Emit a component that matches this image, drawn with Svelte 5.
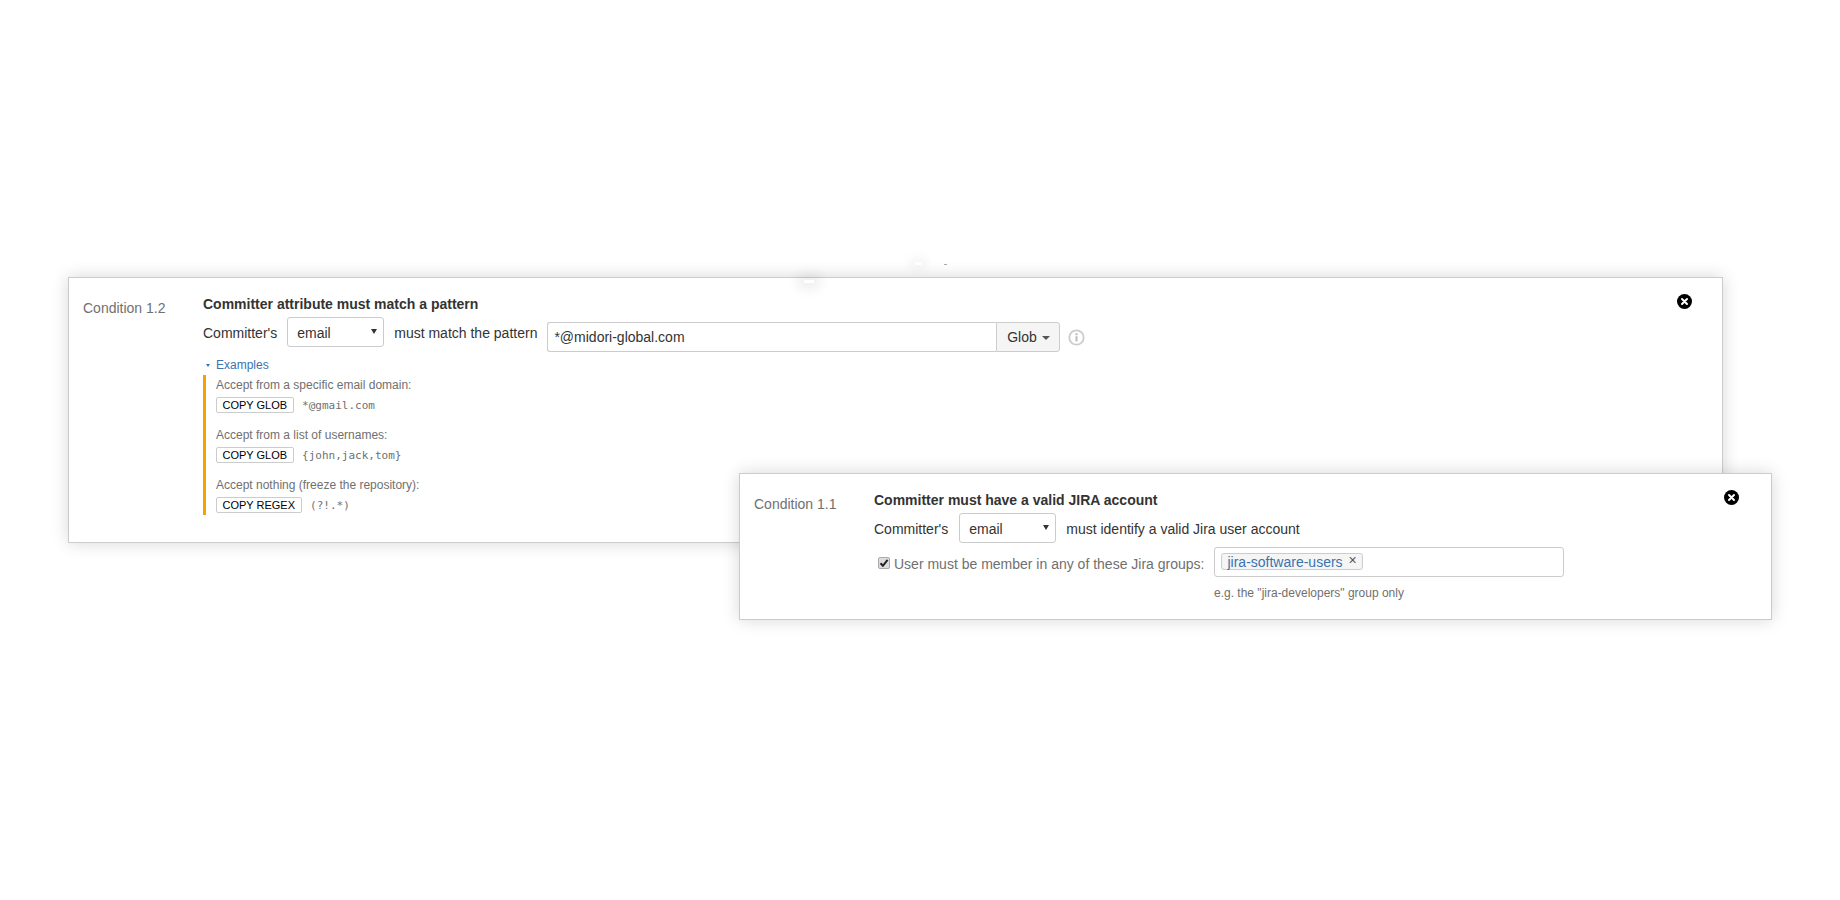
<script>
  const examples = [
    { title: "Accept from a specific email domain:", button: "COPY GLOB", code: "*@gmail.com" },
    { title: "Accept from a list of usernames:", button: "COPY GLOB", code: "{john,jack,tom}" },
    { title: "Accept nothing (freeze the repository):", button: "COPY REGEX", code: "(?!.*)" },
  ];
</script>

{#snippet closeIcon()}
  <svg class="close" width="15" height="15" viewBox="0 0 15 15" aria-hidden="true">
    <circle cx="7.5" cy="7.5" r="7.5" fill="#000" />
    <path d="M5 5l5 5M10 5l-5 5" stroke="#fff" stroke-width="2" stroke-linecap="round" />
  </svg>
{/snippet}

{#snippet attributeSelect()}
  <span class="select-wrap">
    <select>
      <option>email</option>
      <option>username</option>
    </select>
  </span>
{/snippet}

<main class="canvas">
  <section class="card card-pattern">
    <div class="condition">Condition 1.2</div>
    <div class="body">
      <h3>Committer attribute must match a pattern</h3>
      <div class="row">
        <span class="text">Committer's</span>
        {@render attributeSelect()}
        <span class="text">must match the pattern</span>
        <div class="pattern-group">
          <input class="pattern" type="text" value="*@midori-global.com" />
          <button class="glob">Glob <i class="caret"></i></button>
        </div>
        <svg class="info" width="17" height="17" viewBox="0 0 17 17" aria-hidden="true">
          <circle cx="8.5" cy="8.5" r="7.2" fill="none" stroke="#ccc" stroke-width="1.8" />
          <rect x="7.5" y="7.2" width="2" height="5.2" fill="#bbb" />
          <rect x="7.5" y="4.2" width="2" height="2" fill="#bbb" />
        </svg>
      </div>

      <div class="examples-toggle"><i class="tri"></i>Examples</div>
      <div class="examples">
        {#each examples as ex}
          <div class="example">
            <div class="example-title">{ex.title}</div>
            <div class="example-line">
              <button class="copy">{ex.button}</button>
              <code>{ex.code}</code>
            </div>
          </div>
        {/each}
      </div>
    </div>
    {@render closeIcon()}
  </section>

  <section class="card card-jira">
    <div class="condition">Condition 1.1</div>
    <div class="body">
      <h3>Committer must have a valid JIRA account</h3>
      <div class="row">
        <span class="text">Committer's</span>
        {@render attributeSelect()}
        <span class="text">must identify a valid Jira user account</span>
      </div>
      <div class="groups-row">
        <span class="check">
          <svg width="10" height="10" viewBox="0 0 10 10" aria-hidden="true">
            <path d="M1.5 5.2l2.4 2.6L8.6 1.8" fill="none" stroke="#222" stroke-width="2" />
          </svg>
        </span>
        <span class="groups-label">User must be member in any of these Jira groups:</span>
        <div class="groups-input">
          <span class="tag">jira-software-users <span class="tag-x">×</span></span>
        </div>
      </div>
      <div class="hint">e.g. the "jira-developers" group only</div>
    </div>
    {@render closeIcon()}
  </section>

  <!-- stray marks left in the capture -->
  <span class="speck speck-a"></span>
  <span class="speck speck-b"></span>
  <span class="speck speck-c"></span>
</main>

<style>
  :global(body) {
    margin: 0;
    background: #fff;
  }

  .canvas {
    position: relative;
    width: 1840px;
    height: 900px;
    overflow: hidden;
    font-family: "Liberation Sans", Arial, sans-serif;
    font-size: 14px;
    line-height: 20px;
    color: #333;
  }

  .card {
    position: absolute;
    box-sizing: border-box;
    display: flex;
    background: #fff;
    border: 1px solid #ccc;
    box-shadow: 0 0 16px rgba(0, 0, 0, 0.16);
    padding-top: 16px;
    padding-left: 14px;
  }

  .card-pattern {
    left: 68px;
    top: 277px;
    width: 1655px;
    height: 266px;
  }

  .card-jira {
    left: 739px;
    top: 473px;
    width: 1033px;
    height: 147px;
  }

  .condition {
    width: 120px;
    flex: none;
    margin-top: 4px;
    color: #707070;
    line-height: 20px;
  }

  h3 {
    margin: 0 0 3px;
    font-size: 14px;
    line-height: 20px;
    font-weight: bold;
    color: #333;
  }

  .row {
    display: flex;
    align-items: flex-start;
    gap: 10px;
  }

  .text {
    line-height: 32px;
  }

  .select-wrap {
    position: relative;
    display: block;
  }

  .card-jira .select-wrap {
    margin-left: 1px;
  }

  .select-wrap::after {
    content: "";
    position: absolute;
    right: 7px;
    top: 12px;
    border-left: 3px solid transparent;
    border-right: 3px solid transparent;
    border-top: 5px solid #333;
    pointer-events: none;
  }

  select {
    display: block;
    appearance: none;
    box-sizing: border-box;
    width: 97px;
    height: 30px;
    padding: 2px 9px 0;
    font: inherit;
    color: #333;
    background: #fff;
    border: 1px solid #ccc;
    border-radius: 3px;
  }

  .pattern-group {
    display: flex;
    margin-top: 5px;
  }

  .pattern {
    box-sizing: border-box;
    width: 449px;
    height: 30px;
    padding: 0 6px;
    font: inherit;
    color: #333;
    border: 1px solid #ccc;
    border-right: 0;
    border-radius: 3px 0 0 3px;
    outline: none;
  }

  .glob {
    box-sizing: border-box;
    width: 64px;
    height: 30px;
    padding: 0;
    font: inherit;
    color: #333;
    background: #f5f5f5;
    border: 1px solid #ccc;
    border-radius: 0 3px 3px 0;
  }

  .caret {
    display: inline-block;
    margin-left: 1px;
    vertical-align: 2px;
    border-left: 4px solid transparent;
    border-right: 4px solid transparent;
    border-top: 4px solid #555;
  }

  .info {
    margin: 12px 0 0 -2px;
    flex: none;
  }

  .examples-toggle {
    margin: 5px 0 2px;
    font-size: 12px;
    line-height: 16px;
    color: #3b73af;
    display: flex;
    align-items: center;
  }

  .tri {
    width: 0;
    height: 0;
    margin: 0 6px 0 3px;
    border-left: 2.5px solid transparent;
    border-right: 2.5px solid transparent;
    border-top: 3px solid #3b73af;
  }

  .examples {
    border-left: 3px solid #f5a300;
    padding: 2px 0 2px 10px;
  }

  .example + .example {
    margin-top: 14px;
  }

  .example-title {
    font-size: 12px;
    line-height: 16px;
    color: #707070;
  }

  .example-line {
    display: flex;
    align-items: center;
    gap: 8.5px;
    margin-top: 4px;
    height: 16px;
  }

  .copy {
    box-sizing: border-box;
    height: 16px;
    padding: 0 5.5px;
    font-family: inherit;
    font-size: 11px;
    line-height: 14px;
    color: #000;
    background: #fff;
    border: 1px solid #ccc;
    border-radius: 2px;
  }

  code {
    font-family: "DejaVu Sans Mono", monospace;
    font-size: 11px;
    color: #707070;
    margin-top: 1px;
  }

  .groups-row {
    display: flex;
    align-items: flex-start;
    margin-top: 2px;
    padding-left: 4px;
  }

  .check {
    box-sizing: border-box;
    width: 12px;
    height: 12px;
    margin: 10px 4px 0 0;
    display: flex;
    align-items: center;
    justify-content: center;
    background: #ddd;
    border: 1px solid #aaa;
    border-radius: 2px;
  }

  .groups-label {
    line-height: 34px;
    color: #707070;
    margin-right: 10px;
  }

  .groups-input {
    box-sizing: border-box;
    width: 350px;
    height: 30px;
    padding: 5px 6px;
    border: 1px solid #ccc;
    border-radius: 3px;
  }

  .tag {
    display: inline-block;
    box-sizing: border-box;
    height: 17px;
    padding: 0 5px;
    line-height: 17px;
    color: #3b73af;
    background: #f5f5f5;
    border: 1px solid #ccc;
    border-radius: 3px;
    vertical-align: top;
  }

  .tag-x {
    color: #555;
    margin-left: 2px;
    position: relative;
    top: -2px;
  }

  .hint {
    margin: 4px 0 0 340px;
    font-size: 12px;
    line-height: 16px;
    color: #707070;
  }

  .close {
    position: absolute;
    top: 16px;
    right: 30px;
  }

  .card-jira .close {
    right: 32px;
  }

  .speck {
    position: absolute;
    background: #fff;
  }

  .speck-a {
    left: 804px;
    top: 280px;
    width: 10px;
    height: 3px;
    box-shadow: 0 0 12px 6px rgba(0, 0, 0, 0.07);
  }

  .speck-b {
    left: 915px;
    top: 262px;
    width: 7px;
    height: 3px;
    box-shadow: 0 0 10px 5px rgba(0, 0, 0, 0.04);
  }

  .speck-c {
    left: 944px;
    top: 264px;
    width: 3px;
    height: 1px;
    background: #aaa;
  }
</style>
